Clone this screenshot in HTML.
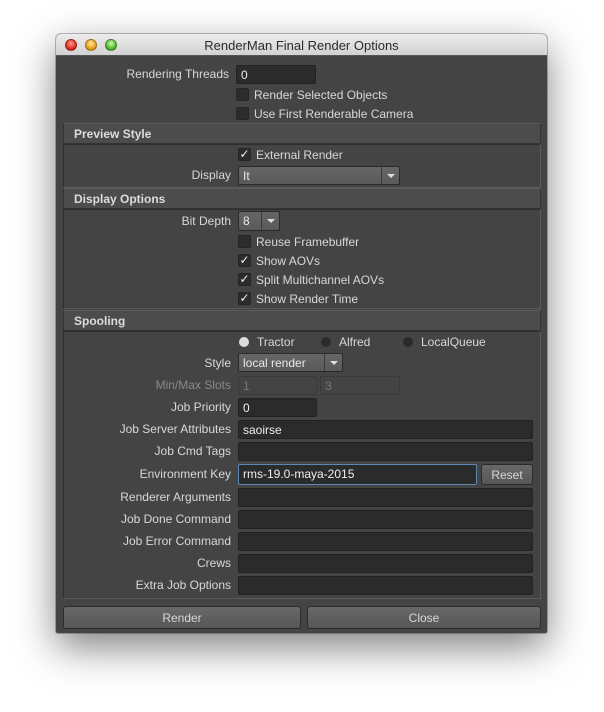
<!DOCTYPE html>
<html><head><style>
*{box-sizing:border-box;margin:0;padding:0}
body{width:604px;height:712px;background:#fff;position:relative;overflow:hidden;font-family:"Liberation Sans",sans-serif;font-size:12px;color:#d8d8d8}
.win{position:absolute;left:56px;top:34px;width:491px;height:599px;background:#444;border-radius:5px 5px 2px 2px;box-shadow:0 14px 40px rgba(0,0,0,.5),0 0 0 1px rgba(0,0,0,.25);overflow:hidden}
.title{position:absolute;left:0;top:0;width:491px;height:22px;background:linear-gradient(#ececec,#d2d2d2);border-bottom:1px solid #555;text-align:center;line-height:23px;font-size:13px;color:#2a2a2a}
.tl{position:absolute;top:5px;width:12px;height:12px;border-radius:50%;border:1px solid rgba(0,0,0,.3)}
.lbl{position:absolute;text-align:right;width:200px;line-height:16px}
.fld{position:absolute;background:#2b2b2b;border:1px solid #222;border-radius:2px;color:#eee;padding-left:4px;line-height:19px}
.cb{position:absolute;width:13px;height:13px;background:#2c2c2c;border:1px solid #252525;border-radius:2px;color:#eee;font-size:12px;line-height:11px;text-align:center}
.ct{position:absolute;line-height:16px}
.hdr{position:absolute;left:7px;width:478px;height:21px;background:#4c4c4c;border:1px solid #333;border-top-color:#5a5a5a;font-weight:bold;padding-left:10px;line-height:20px;color:#dcdcdc}
.frm{position:absolute;left:7px;width:478px;border:1px solid #2e2e2e;border-right-color:#5a5a5a;border-bottom-color:#5a5a5a}
.dd{position:absolute;background:linear-gradient(#666,#5a5a5a);border:1px solid #2a2a2a;border-radius:2px;color:#e8e8e8;padding-left:4px;line-height:19px}
.dd i{position:absolute;right:0;top:0;width:18px;height:100%;border-left:1px solid #3a3a3a}
.dd i:after{content:"";position:absolute;left:5px;top:7px;border:4px solid transparent;border-top:4px solid #ddd}
.btn{position:absolute;height:23px;background:linear-gradient(#686868,#575757);border:1px solid #2a2a2a;border-radius:3px;text-align:center;line-height:22px;color:#d8d8d8}
.rd{position:absolute;width:10px;height:10px;border-radius:50%;background:#2a2a2a}
</style></head><body>
<div class="win">
<div class="title">RenderMan Final Render Options</div>
<div class="tl" style="left:9px;background:radial-gradient(circle at 50% 35%,#f99,#d32 60%,#a11)"></div>
<div class="tl" style="left:29px;background:radial-gradient(circle at 50% 35%,#fe9,#e9a020 60%,#b70)"></div>
<div class="tl" style="left:49px;background:radial-gradient(circle at 50% 35%,#cfa,#5b3 60%,#383)"></div>

<div class="lbl" style="left:-27px;top:32px">Rendering Threads</div>
<div class="fld" style="left:180px;top:31px;width:80px;height:19px">0</div>
<div class="cb" style="left:180px;top:54px"></div><div class="ct" style="left:198px;top:53px">Render Selected Objects</div>
<div class="cb" style="left:180px;top:73px"></div><div class="ct" style="left:198px;top:72px">Use First Renderable Camera</div>

<div class="hdr" style="top:89px">Preview Style</div>
<div class="frm" style="top:110px;height:44px"></div>
<div class="cb" style="left:182px;top:114px">✓</div><div class="ct" style="left:200px;top:113px">External Render</div>
<div class="lbl" style="left:-25px;top:133px">Display</div>
<div class="dd" style="left:182px;top:132px;width:162px;height:19px">It<i></i></div>

<div class="hdr" style="top:154px">Display Options</div>
<div class="frm" style="top:175px;height:100px"></div>
<div class="lbl" style="left:-25px;top:179px">Bit Depth</div>
<div class="dd" style="left:182px;top:177px;width:42px;height:20px">8<i></i></div>
<div class="cb" style="left:182px;top:201px"></div><div class="ct" style="left:200px;top:200px">Reuse Framebuffer</div>
<div class="cb" style="left:182px;top:220px">✓</div><div class="ct" style="left:200px;top:219px">Show AOVs</div>
<div class="cb" style="left:182px;top:239px">✓</div><div class="ct" style="left:200px;top:238px">Split Multichannel AOVs</div>
<div class="cb" style="left:182px;top:258px">✓</div><div class="ct" style="left:200px;top:257px">Show Render Time</div>

<div class="hdr" style="top:276px">Spooling</div>
<div class="frm" style="top:297px;height:268px"></div>
<div class="rd" style="left:183px;top:303px;background:#ddd"></div><div class="ct" style="left:201px;top:300px">Tractor</div>
<div class="rd" style="left:265px;top:303px"></div><div class="ct" style="left:283px;top:300px">Alfred</div>
<div class="rd" style="left:347px;top:303px"></div><div class="ct" style="left:365px;top:300px">LocalQueue</div>
<div class="lbl" style="left:-25px;top:321px">Style</div>
<div class="dd" style="left:182px;top:319px;width:105px;height:19px">local render<i></i></div>
<div class="lbl" style="left:-25px;top:343px;color:#8a8a8a">Min/Max Slots</div>
<div class="fld" style="left:182px;top:342px;width:79px;height:19px;background:#444;border-color:#3a3a3a;color:#777">1</div>
<div class="fld" style="left:264px;top:342px;width:80px;height:19px;background:#444;border-color:#3a3a3a;color:#777">3</div>
<div class="lbl" style="left:-25px;top:365px">Job Priority</div>
<div class="fld" style="left:182px;top:364px;width:79px;height:19px">0</div>
<div class="lbl" style="left:-25px;top:387px">Job Server Attributes</div>
<div class="fld" style="left:182px;top:386px;width:295px;height:19px">saoirse</div>
<div class="lbl" style="left:-25px;top:409px">Job Cmd Tags</div>
<div class="fld" style="left:182px;top:408px;width:295px;height:19px"></div>
<div class="lbl" style="left:-25px;top:432px">Environment Key</div>
<div class="fld" style="left:182px;top:430px;width:239px;height:21px;border-color:#5f87b5">rms-19.0-maya-2015</div>
<div class="btn" style="left:425px;top:430px;width:52px;height:21px;line-height:20px">Reset</div>
<div class="lbl" style="left:-25px;top:455px">Renderer Arguments</div>
<div class="fld" style="left:182px;top:454px;width:295px;height:19px"></div>
<div class="lbl" style="left:-25px;top:477px">Job Done Command</div>
<div class="fld" style="left:182px;top:476px;width:295px;height:19px"></div>
<div class="lbl" style="left:-25px;top:499px">Job Error Command</div>
<div class="fld" style="left:182px;top:498px;width:295px;height:19px"></div>
<div class="lbl" style="left:-25px;top:521px">Crews</div>
<div class="fld" style="left:182px;top:520px;width:295px;height:19px"></div>
<div class="lbl" style="left:-25px;top:543px">Extra Job Options</div>
<div class="fld" style="left:182px;top:542px;width:295px;height:19px"></div>

<div class="btn" style="left:7px;top:572px;width:238px">Render</div>
<div class="btn" style="left:251px;top:572px;width:234px">Close</div>
</div>
</body></html>
